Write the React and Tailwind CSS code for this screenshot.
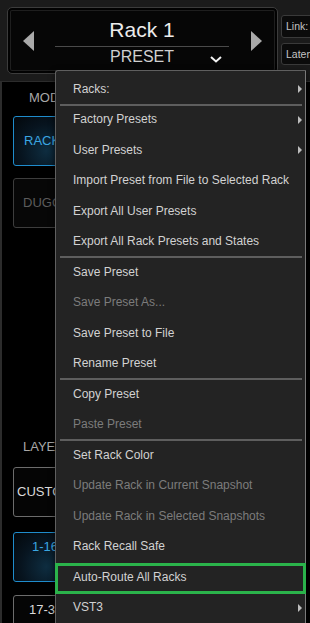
import React from 'react';

const items = [
  { label: 'Racks:', sub: true, sep: true },
  { label: 'Factory Presets', sub: true },
  { label: 'User Presets', sub: true },
  { label: 'Import Preset from File to Selected Rack' },
  { label: 'Export All User Presets' },
  { label: 'Export All Rack Presets and States', sep: true },
  { label: 'Save Preset' },
  { label: 'Save Preset As...', disabled: true },
  { label: 'Save Preset to File' },
  { label: 'Rename Preset', sep: true },
  { label: 'Copy Preset' },
  { label: 'Paste Preset', disabled: true, sep: true },
  { label: 'Set Rack Color' },
  { label: 'Update Rack in Current Snapshot', disabled: true },
  { label: 'Update Rack in Selected Snapshots', disabled: true },
  { label: 'Rack Recall Safe' },
  { label: 'Auto-Route All Racks', marked: true },
  { label: 'VST3', sub: true },
];

function MenuRow({ item }) {
  return (
    <>
      <div className="relative flex h-[30.5px] shrink-0 items-center justify-between pl-[17px] pr-[3px]">
        <span className={item.disabled ? 'text-[#7c7c7c]' : 'text-[#d2d2d2]'}>{item.label}</span>
        {item.sub && (
          <span className="h-0 w-0 border-y-[4px] border-l-[4px] border-y-transparent border-l-[#bdbdbd]" />
        )}
        {item.marked && (
          <div className="absolute -left-[1px] -right-[1px] top-[1px] -bottom-[1px] border-[3px] border-[#2bb34b]" />
        )}
      </div>
      {item.sep && <div className="relative z-10 -my-[1px] ml-[4px] mr-[3px] h-[2px] shrink-0 bg-[#5e5e5e]" />}
    </>
  );
}

const variants = {
  blue: 'border-[#1f8ccc] text-[#3ba7e2] bg-[radial-gradient(ellipse_at_50%_70%,#0e2d40_0%,#07141f_55%,#03070b_100%)]',
  dim: 'border-[#3d3d3d] text-[#5c5c5c] bg-[#070707]',
  light: 'border-[#6c6c6c] text-[#dadada] bg-[#050505]',
};

function SideButton({ children, variant, top, pl }) {
  return (
    <div
      className={`mx-[11px] flex h-[50px] w-[67px] shrink-0 rounded-[3px] border-[1.5px] text-[13px] leading-[16px] whitespace-nowrap ${
        top ? 'items-start pt-[6px]' : 'items-center'
      } ${pl} ${variants[variant]}`}
    >
      {children}
    </div>
  );
}

export default function App() {
  return (
    <div
      className="relative h-[623px] w-[310px] overflow-hidden bg-[#1b1b1b]"
      style={{ fontFamily: '"Liberation Sans", Arial, sans-serif' }}
    >
      {/* header */}
      <div className="flex h-[81px] gap-[3px] pl-[7px] pt-[7px] pb-[7px]">
        <div className="flex w-[271px] items-center rounded-[5px] border border-[#3c3c3c] bg-[#060606] px-[15px] shadow-[inset_0_0_0_2px_#020202,inset_0_0_0_3px_#1e1e1e]">
          <svg width="11" height="20" viewBox="0 0 11 20" className="shrink-0">
            <polygon points="11,0 0,10 11,20" fill="#a9a9a9" />
          </svg>
          <div className="ml-[21px] flex w-[177px] flex-col self-stretch pt-[10px] pr-[3px]">
            <div className="h-[24px] text-center text-[21px] leading-[24px] text-[#ececec]">Rack 1</div>
            <div className="mt-[4px] h-[1px] bg-[#4a4a4a]" />
            <div className="relative mt-[1px] h-[18px] text-center text-[16px] leading-[18px] text-[#d0d0d0]">
              PRESET
              <svg width="12" height="7" viewBox="0 0 12 7" className="absolute right-[7px] top-[8px]">
                <polyline points="1,1 6,5.5 11,1" fill="none" stroke="#f2f2f2" strokeWidth="2" />
              </svg>
            </div>
          </div>
          <svg width="11" height="20" viewBox="0 0 11 20" className="ml-[19px] shrink-0">
            <polygon points="0,0 11,10 0,20" fill="#a9a9a9" />
          </svg>
        </div>
        <div className="flex w-[40px] shrink-0 flex-col gap-[5px] pt-[8px]">
          <div className="h-[23px] rounded-[3px] border border-[#3a3a3a] bg-[#0b0b0b] pl-[4px] text-[10.5px] leading-[21px] text-[#c4c4c4]">
            Link:
          </div>
          <div className="h-[22px] overflow-hidden rounded-[3px] border border-[#3a3a3a] bg-[#0b0b0b] pl-[4px] text-[10.5px] leading-[20px] text-[#c4c4c4] whitespace-nowrap">
            Latency
          </div>
        </div>
      </div>

      {/* body */}
      <div className="flex h-[542px] border-t border-l-[2px] border-[#2c2c2c] bg-black">
        <div className="flex w-[93px] flex-col">
          <div className="mt-[8px] h-[16px] pl-[27px] text-[13px] leading-[16px] text-[#a8a8a8]">MODE</div>
          <div className="mt-[10px]">
            <SideButton variant="blue" pl="pl-[10px]">RACKS</SideButton>
          </div>
          <div className="mt-[12px]">
            <SideButton variant="dim" pl="pl-[9px]">DUGOUT</SideButton>
          </div>
          <div className="mt-[211px] h-[16px] pl-[21px] text-[13px] leading-[16px] text-[#a8a8a8]">LAYER</div>
          <div className="mt-[12px]">
            <SideButton variant="light" pl="pl-[3px]">CUSTOM</SideButton>
          </div>
          <div className="mt-[15px]">
            <SideButton variant="blue" top pl="pl-[18px]">
              1-16
            </SideButton>
          </div>
          <div className="mt-[13px]">
            <SideButton variant="light" top pl="pl-[15px]">
              17-32
            </SideButton>
          </div>
        </div>
      </div>

      {/* dropdown menu */}
      <div className="absolute left-[55px] top-[70px] flex h-[570px] w-[251px] flex-col rounded-tl-[3px] border border-[#5f5f5f] border-r-[#7a7a7a] bg-[#232323] pt-[3px] text-[12px] leading-[15px] shadow-[0_2px_6px_rgba(0,0,0,0.6)]">
        {items.map((item) => (
          <MenuRow key={item.label} item={item} />
        ))}
      </div>
    </div>
  );
}
